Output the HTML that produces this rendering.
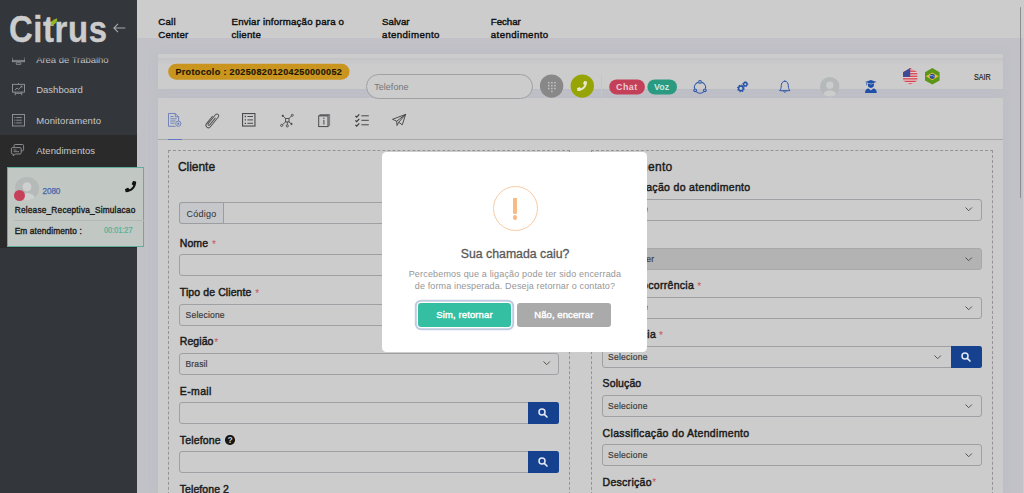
<!DOCTYPE html>
<html lang="pt-BR">
<head>
<meta charset="utf-8">
<title>Citrus</title>
<style>
*{box-sizing:border-box;margin:0;padding:0}
html,body{width:1024px;height:493px;overflow:hidden}
body{position:relative;background:#c1c1c7;font-family:"Liberation Sans",sans-serif;color:#111}
.a,.t{position:absolute}
.t{white-space:nowrap;line-height:1}
.card{background:#ccc}
.inp{border:1px solid #9fa0a3;border-radius:3px;background:#ccc;height:22px}
.btn{background:#16418e;border-radius:0 2.500px 2.500px 0;height:22px;width:30px}
.req{color:#c9535a}
svg{position:absolute;overflow:visible}
</style>
</head>
<body>
<!-- header -->
<div class="a" style="left:137px;top:0;width:887px;height:38px;background:#ccc"></div>
<div class="t" id="n1a" style="left:158.30px;top:17.39px;font-size:9.7px;color:#0f0f0f;-webkit-text-stroke:0.4px #0f0f0f;letter-spacing:0.199px;">Call</div><div class="t" id="n1b" style="left:158.30px;top:30.39px;font-size:9.7px;color:#0f0f0f;-webkit-text-stroke:0.4px #0f0f0f;letter-spacing:0.184px;">Center</div><div class="t" id="n2a" style="left:231.50px;top:17.39px;font-size:9.7px;color:#0f0f0f;-webkit-text-stroke:0.4px #0f0f0f;letter-spacing:0.185px;">Enviar informação para o</div><div class="t" id="n2b" style="left:231.50px;top:30.39px;font-size:9.7px;color:#0f0f0f;-webkit-text-stroke:0.4px #0f0f0f;letter-spacing:0.214px;">cliente</div><div class="t" id="n3a" style="left:382.10px;top:17.39px;font-size:9.7px;color:#0f0f0f;-webkit-text-stroke:0.4px #0f0f0f;letter-spacing:0.006px;">Salvar</div><div class="t" id="n3b" style="left:382.10px;top:30.39px;font-size:9.7px;color:#0f0f0f;-webkit-text-stroke:0.4px #0f0f0f;letter-spacing:0.407px;">atendimento</div><div class="t" id="n4a" style="left:490.80px;top:17.39px;font-size:9.7px;color:#0f0f0f;-webkit-text-stroke:0.4px #0f0f0f;letter-spacing:-0.051px;">Fechar</div><div class="t" id="n4b" style="left:490.80px;top:30.39px;font-size:9.7px;color:#0f0f0f;-webkit-text-stroke:0.4px #0f0f0f;letter-spacing:0.407px;">atendimento</div>

<!-- cards -->
<div class="a card" style="left:158px;top:54px;width:845px;height:35px;box-shadow:0 0 9px rgba(176,176,200,.28)"></div>
<div class="a card" style="left:158px;top:97.5px;width:845px;height:396px;box-shadow:0 0 9px rgba(176,176,200,.28)"></div>

<div class="a" style="left:158px;top:58px;width:845px;height:7px;background:linear-gradient(rgba(168,168,180,.22),rgba(168,168,180,0))"></div>
<!-- toolbar row -->
<svg style="left:0;top:0" width="1024" height="100" viewBox="0 0 1024 100"><rect x="168.2" y="63.7" width="181.3" height="16" rx="8" fill="#c9951e"/></svg>
<div class="t" id="proto" style="left:175.40px;top:68.38px;font-size:9px;color:#1d1505;font-weight:bold;-webkit-text-stroke:0.15px #1d1505;letter-spacing:0.353px;">Protocolo : 202508201204250000052</div>
<div class="a" style="left:366px;top:74px;width:167px;height:25px;border:1px solid #9fa0a4;border-radius:13px;background:#ccc"></div>
<div class="t" id="telph" style="left:374.20px;top:82.68px;font-size:9px;color:#75767a;letter-spacing:0.038px;">Telefone</div>
<svg style="left:0;top:0" width="1024" height="110" viewBox="0 0 1024 110"><circle cx="551.6" cy="86.1" r="11.7" fill="#888"/><circle cx="582.3" cy="86.1" r="11.7" fill="#96a505"/><rect x="609.2" y="79.4" width="35.7" height="15" rx="7.5" fill="#c34058"/><rect x="647.4" y="79.4" width="29.6" height="15" rx="7.5" fill="#2a9a80"/></svg>
<svg style="left:548px;top:81.5px" width="8" height="10.5" viewBox="0 0 8 10.5"><g fill="#c2c2c2"><rect x="0" y="0" width="1.5" height="1.5"/><rect x="3.1" y="0" width="1.5" height="1.5"/><rect x="6.2" y="0" width="1.5" height="1.5"/><rect x="0" y="2.9" width="1.5" height="1.5"/><rect x="3.1" y="2.9" width="1.5" height="1.5"/><rect x="6.2" y="2.9" width="1.5" height="1.5"/><rect x="0" y="5.8" width="1.5" height="1.5"/><rect x="3.1" y="5.8" width="1.5" height="1.5"/><rect x="6.2" y="5.8" width="1.5" height="1.5"/><rect x="3.1" y="8.7" width="1.5" height="1.5"/></g></svg>
<svg style="left:577.3px;top:81px" width="10" height="10" viewBox="0 0 512 512"><path fill="#e6ebcf" d="M493.4 24.6l-104-24c-11.3-2.6-22.9 3.300-27.500 13.900l-48 112c-4.200 9.800-1.400 21.300 6.900 28l60.600 49.600c-36 76.700-98.900 140.500-177.200 177.200l-49.600-60.600c-6.800-8.300-18.200-11.100-28-6.900l-112 48C3.900 366.500-2 378.100.6 389.400l24 104C27.100 504.200 36.700 512 48 512c256.100 0 464-207.500 464-464 0-11.200-7.700-20.900-18.600-23.400z"/></svg>
<div class="a" style="left:601.3px;top:74px;width:1px;height:24.5px;background:#c4c4c9"></div>
<div class="t" id="chat" style="left:616.00px;top:83.37px;font-size:8.9px;color:#eccbd2;font-weight:bold;letter-spacing:0.522px;">Chat</div>
<div class="t" id="voz" style="left:653.90px;top:83.37px;font-size:8.9px;color:#c8e8e0;font-weight:bold;letter-spacing:0.088px;">Voz</div>
<!-- share icon -->
<svg style="left:692.6px;top:80px" width="14" height="13.5" viewBox="0 0 14 13.5" fill="none" stroke="#2b55a8" stroke-width="1.050"><circle cx="7" cy="1.900" r="1.350"/><circle cx="2.150" cy="10.300" r="1.350"/><circle cx="11.850" cy="10.300" r="1.350"/><path d="M8.730 2.170 A5.600 5.600 0 0 1 12.480 8.660"/><path d="M10.750 11.660 A5.600 5.600 0 0 1 3.250 11.660"/><path d="M1.520 8.660 A5.600 5.600 0 0 1 5.270 2.170"/></svg>
<!-- gears icon -->
<svg style="left:737px;top:81px" width="11.5" height="11.5" viewBox="0 0 11.500 11.500" fill="none" stroke="#2350a6"><circle cx="3.900" cy="7.400" r="2.300" stroke-width="1.500"/><circle cx="3.900" cy="7.400" r="3.300" stroke-width="1.100" stroke-dasharray="1.300 1.290"/><circle cx="8.300" cy="3.200" r="1.700" stroke-width="1.300"/><circle cx="8.300" cy="3.200" r="2.500" stroke-width="1" stroke-dasharray="1 .96"/></svg>
<!-- bell icon -->
<svg style="left:779.4px;top:80px" width="11.6" height="13.500" viewBox="0 0 11.600 13.500" fill="none" stroke="#2b55a8" stroke-width="1"><path d="M5.800 1.300 C3.200 1.300 2.300 3.600 2.300 5.600 C2.300 8.200 1.500 9.600 .7 10.700 L10.900 10.700 C10.100 9.600 9.300 8.200 9.300 5.600 C9.300 3.600 8.400 1.300 5.800 1.300 Z"/><path d="M5.800 1.300 L5.800 .3"/><path d="M4.500 11.300 A1.400 1.400 0 0 0 7.100 11.300"/></svg>
<!-- avatar -->
<svg style="left:819.6px;top:77px" width="19.6" height="19.6" viewBox="0 0 24 24"><defs><clipPath id="av"><circle cx="12" cy="12" r="12"/></clipPath></defs><g clip-path="url(#av)"><rect width="24" height="24" fill="#b5b9b9"/><circle cx="12" cy="10" r="4.500" fill="#cbcdcd"/><ellipse cx="12" cy="22.500" rx="8.300" ry="6.300" fill="#cbcdcd"/></g></svg>
<!-- graduate icon -->
<svg style="left:864.8px;top:80.2px" width="11.800" height="13" viewBox="0 0 11.800 13" fill="#1f4fa8"><path d="M5.900 0 L11.600 1.900 L5.900 3.800 L.2 1.900 Z"/><path d="M1 2.500 L1.600 2.700 L1.600 5.300 L1 5.300 Z"/><path d="M2.800 3.300 L5.900 4.400 L9 3.300 L9 4.600 A3.100 3.300 0 0 1 2.800 4.600 Z"/><path d="M0 13 C0 10.100 1.500 8.800 3.500 8.600 L5.900 10.600 L8.300 8.600 C10.300 8.800 11.800 10.100 11.800 13 Z"/></svg>
<!-- US flag -->
<svg style="left:902.8px;top:68px" width="14.600" height="16.600" viewBox="0 0 14.600 16.600"><defs><clipPath id="hx"><path d="M7.300 0 L14.600 4.150 L14.600 12.450 L7.300 16.600 L0 12.450 L0 4.150 Z"/></clipPath></defs><g clip-path="url(#hx)"><rect width="14.600" height="16.600" fill="#e2cdd1"/><g fill="#d6414c"><rect y="0" width="14.600" height="1.280"/><rect y="2.550" width="14.600" height="1.280"/><rect y="5.100" width="14.600" height="1.280"/><rect y="7.650" width="14.600" height="1.280"/><rect y="10.200" width="14.600" height="1.280"/><rect y="12.750" width="14.600" height="1.280"/><rect y="15.300" width="14.600" height="1.300"/></g><rect width="7.200" height="8.900" fill="#3e4a94"/></g></svg>
<!-- BR flag -->
<svg style="left:925.4px;top:68px" width="14.600" height="16.600" viewBox="0 0 14.600 16.600"><path d="M7.300 0 L14.600 4.150 L14.600 12.450 L7.300 16.600 L0 12.450 L0 4.150 Z" fill="#5b9616"/><path d="M.9 8.300 L7.300 4.400 L13.700 8.300 L7.300 12.200 Z" fill="#dfc13d"/><circle cx="7.300" cy="8.300" r="2.600" fill="#2d4b9d"/><path d="M4.900 7.600 Q7.300 7 9.800 8.900" stroke="#c9d2e8" stroke-width=".6" fill="none"/></svg>
<div class="t" id="sair" style="left:974.00px;top:74.36px;font-size:8.2px;color:#222;-webkit-text-stroke:0.15px #222;transform:scaleX(0.878);transform-origin:0 0;">SAIR</div>

<!-- tab icons -->
<div class="a" style="left:158px;top:139px;width:845px;height:1px;background:#a8a8ac"></div>
<div class="a" style="left:168px;top:138.600px;width:14px;height:1.400px;background:#5f78c4"></div>
<!-- doc -->
<svg style="left:168.200px;top:113.200px" width="13.500" height="13.800" viewBox="0 0 13.500 13.800" fill="none" stroke="#5c74b4" stroke-width=".8"><path d="M10.600 8 L10.600 3.800 L7.300 .5 L.5 .5 L.5 13.300 L7.600 13.300"/><path d="M7.300 .5 L7.300 3.800 L10.600 3.800"/><path d="M2.300 3.600 L5.500 3.600 M2.300 5.800 L8.600 5.800 M2.300 8 L7.600 8 M2.300 10.200 L6.600 10.200" stroke-width=".8"/><circle cx="10.300" cy="10.700" r="2.600"/><rect x="9.400" y="9.800" width="1.800" height="1.800" fill="#5c74b4" stroke="none"/></svg>
<!-- clip -->
<svg style="left:205px;top:112.500px" width="14.500" height="15.500" viewBox="0 0 14.500 15.500" fill="none" stroke="#555557" stroke-width="1" stroke-linecap="round"><g transform="translate(7.200 7.600) rotate(39)"><path d="M-2.500 -3.500 L-2.500 5.950 A2.500 2.500 0 0 0 2.500 5.950 L2.500 -6.600 A1.850 1.850 0 0 0 -1.200 -6.600 L-1.200 4.900 A1 1 0 0 0 .8 4.900 L.8 -3.800"/></g></svg>
<!-- list -->
<svg style="left:242.400px;top:113.300px" width="13.500" height="13.600" viewBox="0 0 13.500 13.600" fill="none" stroke="#4a4a4c"><rect x=".55" y=".55" width="12.400" height="12.500" stroke-width="1.100"/><path d="M5.400 3.500 L11 3.500 M5.400 6.900 L11 6.900 M5.400 10.300 L11 10.300" stroke-width="1"/><path d="M2.700 3.500 L4 3.500 M2.700 6.900 L4 6.900 M2.700 10.300 L4 10.300" stroke-width="1.300"/></svg>
<!-- network -->
<svg style="left:280px;top:113.600px" width="14.400" height="13.400" viewBox="0 0 14.400 13.400" fill="none" stroke="#47474a" stroke-width=".9"><rect x="5.600" y="4.500" width="3.400" height="3.400"/><path d="M5.600 4.500 L3.300 2.200 M9 4.500 L11.500 2 M5.600 7.900 L2.500 10.700 M7.300 7.900 L7.300 10.800 M9 7.900 L11 9.600"/><circle cx="2.800" cy="1.800" r=".7" fill="#47474a"/><circle cx="12.300" cy="1.300" r="1"/><circle cx="1.700" cy="11.400" r="1.100"/><circle cx="7.300" cy="11.900" r="1.100"/><circle cx="11.500" cy="10" r=".7" fill="#47474a"/></svg>
<!-- info book -->
<svg style="left:318px;top:113.900px" width="12.200" height="13.200" viewBox="0 0 12.200 13.200" fill="none" stroke="#4b4b4e"><rect x=".7" y="1.900" width="9.300" height="10.700" stroke-width="1"/><path d="M1 1.500 L2 .5 L12 .5 L10.200 1.500 Z" fill="#4b4b4e" stroke-width=".3"/><path d="M10.300 1.700 L11.800 .6 L11.800 11.400 L10.300 12.700 Z" fill="#77777b" stroke="#77777b" stroke-width=".4"/><path d="M5.900 6 L5.900 10.600" stroke-width="1"/><circle cx="5.900" cy="4.300" r=".7" fill="#4b4b4e" stroke="none"/></svg>
<!-- checklist -->
<svg style="left:354.600px;top:114.300px" width="14" height="12" viewBox="0 0 14 12" fill="none" stroke="#47474a" stroke-width="1"><path d="M6.400 1.800 L13.800 1.800 M6.400 6.300 L13.800 6.300 M6.400 10.800 L13.800 10.800"/><path d="M.4 1.800 L1.700 3.100 L4.300 .3 M.4 6.300 L1.700 7.600 L4.300 4.800 M.4 10.800 L1.700 12.100 L4.300 9.300" stroke-width="1.150" stroke="#38383a"/></svg>
<!-- plane -->
<svg style="left:392.200px;top:114.300px" width="14" height="12" viewBox="0 0 14 12" fill="none" stroke="#3f3f42" stroke-width=".9" stroke-linejoin="round"><path d="M13.600 .4 L.5 5.300 L4.700 7.200 L13.600 .4 L10.300 10.800 L6.700 8.300 L5 11.500 L4.700 7.200"/><path d="M6.700 8.300 L13.600 .4"/></svg>

<!-- dashed boxes -->
<div class="a" style="left:168.200px;top:150.200px;width:401.800px;height:360px;border:1px dashed #949497"></div>
<div class="a" style="left:591.200px;top:150.200px;width:401.800px;height:360px;border:1px dashed #949497"></div>
<div class="t" id="tcli" style="left:177.90px;top:160.64px;font-size:12px;color:#1b1b1b;-webkit-text-stroke:0.4px #1b1b1b;letter-spacing:-0.027px;">Cliente</div><div class="t" id="tatd" style="right:351.35px;top:160.64px;font-size:12px;color:#1b1b1b;-webkit-text-stroke:0.4px #1b1b1b;letter-spacing:0.350px;">Atendimento</div>

<!-- left column -->
<div class="a inp" style="left:179.300px;top:202px;width:379.500px"></div>
<div class="a" style="left:179.300px;top:202px;width:44.500px;height:22px;border:1px solid #9c9da0;border-radius:3px 0 0 3px;background:#c6c7ca"></div>
<div class="t" id="cod" style="left:186.60px;top:209.88px;font-size:9px;color:#2e2e2e;letter-spacing:0.234px;">Código</div>
<div class="t" id="l1" style="left:179.80px;top:238.31px;font-size:10.5px;color:#1b1b1b;-webkit-text-stroke:0.45px #1b1b1b;letter-spacing:0.061px;">Nome</div><div class="t" id="l1r" style="left:212.00px;top:239.73px;font-size:10px;color:#c9535a;">*</div>
<div class="a inp" style="left:179.300px;top:254px;width:379.500px"></div>
<div class="t" id="l2" style="left:179.80px;top:287.31px;font-size:10.5px;color:#1b1b1b;-webkit-text-stroke:0.45px #1b1b1b;letter-spacing:0.098px;">Tipo de Cliente</div><div class="t" id="l2r" style="left:255.30px;top:288.74px;font-size:10px;color:#c9535a;">*</div>
<div class="a inp" style="left:179.300px;top:303.500px;width:379.500px"></div>
<div class="t" id="s2" style="left:185.60px;top:310.50px;font-size:8.5px;color:#3c3c3c;-webkit-text-stroke:0.2px #3c3c3c;letter-spacing:0.207px;">Selecione</div><svg style="left:542.500px;top:312px" width="7.400" height="4.400" viewBox="0 0 7.400 4.400"><path d="M.5 .5 L3.700 3.700 L6.900 .5" fill="none" stroke="#4c4c4c" stroke-width=".95"/></svg>
<div class="t" id="l3" style="left:179.80px;top:336.31px;font-size:10.5px;color:#1b1b1b;-webkit-text-stroke:0.45px #1b1b1b;letter-spacing:0.064px;">Região</div><div class="t" id="l3r" style="left:214.30px;top:337.74px;font-size:10px;color:#c9535a;">*</div>
<div class="a inp" style="left:179.300px;top:352.500px;width:379.500px"></div>
<div class="t" id="s3" style="left:185.60px;top:359.50px;font-size:8.5px;color:#3c3c3c;-webkit-text-stroke:0.2px #3c3c3c;letter-spacing:0.107px;">Brasil</div><svg style="left:542.500px;top:361px" width="7.400" height="4.400" viewBox="0 0 7.400 4.400"><path d="M.5 .5 L3.700 3.700 L6.900 .5" fill="none" stroke="#4c4c4c" stroke-width=".95"/></svg>
<div class="t" id="l4" style="left:179.80px;top:385.61px;font-size:10.5px;color:#1b1b1b;-webkit-text-stroke:0.45px #1b1b1b;letter-spacing:0.367px;">E-mail</div>
<div class="a inp" style="left:179.300px;top:402px;width:349.500px;border-radius:3px 0 0 3px"></div>
<div class="a btn" style="left:528px;top:402px;width:30.800px"></div>
<svg style="left:538px;top:407.700px" width="10" height="10" viewBox="0 0 10 10"><circle cx="4" cy="4" r="3" fill="none" stroke="#e3e9f6" stroke-width="1.500"/><path d="M6.300 6.300 L9 9" stroke="#e3e9f6" stroke-width="1.700" stroke-linecap="round"/></svg>
<div class="t" id="l5" style="left:179.80px;top:435.01px;font-size:10.5px;color:#1b1b1b;-webkit-text-stroke:0.45px #1b1b1b;letter-spacing:0.142px;">Telefone</div>
<div class="a" style="left:225.300px;top:435.200px;width:9.400px;height:9.400px;border-radius:50%;background:#161616"></div>
<div class="t" style="left:227.600px;top:436.100px;font-size:8.500px;font-weight:bold;color:#cfcfcf">?</div>
<div class="a inp" style="left:179.300px;top:451px;width:349.500px;border-radius:3px 0 0 3px"></div>
<div class="a btn" style="left:528px;top:451px;width:30.800px"></div>
<svg style="left:538px;top:456.700px" width="10" height="10" viewBox="0 0 10 10"><circle cx="4" cy="4" r="3" fill="none" stroke="#e3e9f6" stroke-width="1.500"/><path d="M6.300 6.300 L9 9" stroke="#e3e9f6" stroke-width="1.700" stroke-linecap="round"/></svg>
<div class="t" id="l6" style="left:179.80px;top:484.21px;font-size:10.5px;color:#1b1b1b;-webkit-text-stroke:0.45px #1b1b1b;letter-spacing:0.070px;">Telefone 2</div>

<!-- right column -->
<div class="t" id="r1" style="right:273.47px;top:181.61px;font-size:10.5px;color:#1b1b1b;-webkit-text-stroke:0.45px #1b1b1b;letter-spacing:0.330px;">Finalização do atendimento</div>
<div class="a inp" style="left:602.200px;top:198.500px;width:379.500px"></div>
<div class="t" id="rv1" style="right:375.70px;top:205.30px;font-size:8.5px;color:#3b62b5;-webkit-text-stroke:0.2px #3b62b5;letter-spacing:0.300px;">Selecione</div><svg style="left:965px;top:207px" width="7.400" height="4.400" viewBox="0 0 7.400 4.400"><path d="M.5 .5 L3.700 3.700 L6.900 .5" fill="none" stroke="#4c4c4c" stroke-width=".95"/></svg>
<div class="a inp" style="left:602.200px;top:247.800px;width:379.500px;background:#b3b3b3;border-color:#a8a8a9"></div>
<div class="t" id="rv2" style="right:369.70px;top:254.80px;font-size:8.5px;color:#3c3c3c;-webkit-text-stroke:0.2px #3c3c3c;letter-spacing:0.300px;">Responder</div><svg style="left:965px;top:256.500px" width="7.400" height="4.400" viewBox="0 0 7.400 4.400"><path d="M.5 .5 L3.700 3.700 L6.900 .5" fill="none" stroke="#4c4c4c" stroke-width=".95"/></svg>
<div class="t" id="r3" style="right:329.90px;top:280.41px;font-size:10.5px;color:#1b1b1b;-webkit-text-stroke:0.45px #1b1b1b;letter-spacing:0.300px;">Tipo de ocorrência</div><div class="t" id="r3r" style="left:697.20px;top:281.84px;font-size:10px;color:#c9535a;">*</div>
<div class="a inp" style="left:602.200px;top:296.800px;width:379.500px"></div>
<div class="t" id="rv3" style="right:375.70px;top:303.30px;font-size:8.5px;color:#3b62b5;-webkit-text-stroke:0.2px #3b62b5;letter-spacing:0.300px;">Selecione</div><svg style="left:965px;top:305.500px" width="7.400" height="4.400" viewBox="0 0 7.400 4.400"><path d="M.5 .5 L3.700 3.700 L6.900 .5" fill="none" stroke="#4c4c4c" stroke-width=".95"/></svg>
<div class="t" id="r4" style="right:367.90px;top:329.21px;font-size:10.5px;color:#1b1b1b;-webkit-text-stroke:0.45px #1b1b1b;letter-spacing:0.300px;">Ocorrência</div><div class="t" id="r4r" style="left:659.00px;top:330.64px;font-size:10px;color:#c9535a;">*</div>
<div class="a inp" style="left:602.200px;top:346px;width:349.500px;border-radius:3px 0 0 3px"></div>
<div class="a btn" style="left:951px;top:346px;width:30.700px"></div>
<svg style="left:961px;top:351.600px" width="10" height="10" viewBox="0 0 10 10"><circle cx="4" cy="4" r="3" fill="none" stroke="#e3e9f6" stroke-width="1.500"/><path d="M6.300 6.300 L9 9" stroke="#e3e9f6" stroke-width="1.700" stroke-linecap="round"/></svg>
<div class="t" id="s4r" style="left:608.00px;top:352.60px;font-size:8.5px;color:#3c3c3c;-webkit-text-stroke:0.2px #3c3c3c;letter-spacing:0.257px;">Selecione</div><svg style="left:934px;top:354.500px" width="7.400" height="4.400" viewBox="0 0 7.400 4.400"><path d="M.5 .5 L3.700 3.700 L6.900 .5" fill="none" stroke="#4c4c4c" stroke-width=".95"/></svg>
<div class="t" id="r5" style="left:602.60px;top:378.41px;font-size:10.5px;color:#1b1b1b;-webkit-text-stroke:0.45px #1b1b1b;letter-spacing:0.108px;">Solução</div>
<div class="a inp" style="left:602.200px;top:395px;width:379.500px"></div>
<div class="t" id="s5r" style="left:608.00px;top:401.60px;font-size:8.5px;color:#3c3c3c;-webkit-text-stroke:0.2px #3c3c3c;letter-spacing:0.257px;">Selecione</div><svg style="left:965px;top:403.500px" width="7.400" height="4.400" viewBox="0 0 7.400 4.400"><path d="M.5 .5 L3.700 3.700 L6.900 .5" fill="none" stroke="#4c4c4c" stroke-width=".95"/></svg>
<div class="t" id="r6" style="left:602.60px;top:427.61px;font-size:10.5px;color:#1b1b1b;-webkit-text-stroke:0.45px #1b1b1b;letter-spacing:0.328px;">Classificação do Atendimento</div>
<div class="a inp" style="left:602.200px;top:444.300px;width:379.500px"></div>
<div class="t" id="s6r" style="left:608.00px;top:450.60px;font-size:8.5px;color:#3c3c3c;-webkit-text-stroke:0.2px #3c3c3c;letter-spacing:0.257px;">Selecione</div><svg style="left:965px;top:452.800px" width="7.400" height="4.400" viewBox="0 0 7.400 4.400"><path d="M.5 .5 L3.700 3.700 L6.900 .5" fill="none" stroke="#4c4c4c" stroke-width=".95"/></svg>
<div class="t" id="r7" style="left:602.60px;top:476.91px;font-size:10.5px;color:#1b1b1b;-webkit-text-stroke:0.45px #1b1b1b;letter-spacing:0.277px;">Descrição</div><div class="t" id="r7r" style="left:652.30px;top:478.34px;font-size:10px;color:#c9535a;">*</div>

<!-- sidebar -->
<div class="a" style="left:0;top:0;width:137px;height:493px;background:#33363b"></div>
<div class="a" style="left:0;top:135px;width:137px;height:113px;background:#2a2a2a"></div>
<div class="t" id="m1" style="left:36.20px;top:54.96px;font-size:9.5px;color:#c8c8c8;letter-spacing:-0.033px;">Área de Trabalho</div><div class="t" id="m2" style="left:36.20px;top:85.46px;font-size:9.5px;color:#c8c8c8;letter-spacing:0.014px;">Dashboard</div><div class="t" id="m3" style="left:36.20px;top:115.66px;font-size:9.5px;color:#c8c8c8;letter-spacing:0.127px;">Monitoramento</div><div class="t" id="m4" style="left:36.20px;top:145.76px;font-size:9.5px;color:#c8c8c8;letter-spacing:0.073px;">Atendimentos</div>
<!-- sidebar icons -->
<svg style="left:11.500px;top:52px" width="13" height="13" viewBox="0 0 13 13" fill="none" stroke="#9b9da1" stroke-width=".85"><rect x=".5" y=".5" width="12" height="9.200"/><path d="M.5 8.400 L12.500 8.400"/><path d="M4.200 10.700 L8.800 10.700 L8.800 12.400 L4.200 12.400 Z" stroke-width=".7"/></svg>
<svg style="left:11.500px;top:83px" width="13" height="12.500" viewBox="0 0 13 12.500" fill="none" stroke="#9b9da1" stroke-width=".85"><rect x=".5" y="1.300" width="12" height="7.800"/><path d="M6.500 1.300 L6.500 .2"/><path d="M2.800 7.200 L5 5 L6.600 6.300 L10 3.100 M8.600 3.100 L10 3.100 L10 4.500" stroke-width=".8"/><path d="M3.200 9.100 L3.200 12.300 M9.800 9.100 L9.800 12.300 M3.200 10.400 L9.800 10.400" stroke-width=".8"/></svg>
<svg style="left:11.500px;top:113.700px" width="13" height="12.500" viewBox="0 0 13 12.500" fill="none" stroke="#9b9da1" stroke-width=".85"><rect x=".5" y=".5" width="12" height="11.500"/><path d="M4.200 3.500 L9.800 3.500 M4.200 6.200 L9.800 6.200 M4.200 8.900 L9.800 8.900" stroke-width=".8"/><path d="M2.400 3.500 L3.300 3.500 M2.400 6.200 L3.300 6.200 M2.400 8.900 L3.300 8.900" stroke-width="1"/></svg>
<svg style="left:11.300px;top:144px" width="13" height="12.500" viewBox="0 0 13 12.500" fill="none" stroke="#9b9da1" stroke-width=".85"><path d="M3 3.300 L3 1.700 Q3 .5 4.200 .5 L11.400 .5 Q12.600 .5 12.600 1.700 L12.600 5.600 Q12.600 6.800 11.400 6.800 L10.400 6.800"/><path d="M1.600 3.600 L9 3.600 Q10.200 3.600 10.200 4.800 L10.200 8.800 Q10.200 10 9 10 L4.200 10 L2.300 11.900 L2.300 10 L1.600 10 Q.4 10 .4 8.800 L.4 4.800 Q.4 3.600 1.600 3.600 Z"/><path d="M2.500 6 L5.500 6 M2.500 7.700 L8 7.700" stroke-width=".8"/></svg>
<!-- logo area -->
<div class="a" style="left:0;top:0;width:137px;height:57px;background:#33363b"></div>
<div class="a" style="left:0;top:57px;width:137px;height:4px;background:linear-gradient(rgba(51,54,59,.8),rgba(51,54,59,0))"></div>
<div class="t" id="logo" style="left:8.50px;top:11.38px;font-size:37px;color:#cccccc;font-weight:bold;-webkit-text-stroke:0.4px #cccccc;letter-spacing:0.631px;transform:scaleX(.89);transform-origin:0 0;">Citrus</div>
<svg style="left:50px;top:18px" width="7.500" height="8" viewBox="0 0 7.500 8"><path d="M.7 7.800 Q-.3 2.300 7.200 .2 Q7.600 6 .7 7.800 Z" fill="#93b71c"/></svg>
<svg style="left:112.800px;top:22.500px" width="12.500" height="10" viewBox="0 0 12.500 10" fill="none" stroke="#a6a9af" stroke-width="1.100"><path d="M12.300 5 L.9 5 M5 .8 L.9 5 L5 9.200"/></svg>

<!-- call card -->
<div class="a" style="left:7.200px;top:166.700px;width:136.500px;height:80.500px;background:#c1c7c2;border:1px solid #62ad9b"></div>
<div class="a" style="left:15px;top:176.800px;width:24px;height:23.200px;border-radius:50%;background:#b5b9b8;overflow:hidden"><svg style="left:0;top:0" width="24" height="24" viewBox="0 0 24 24"><circle cx="12" cy="9.800" r="4.500" fill="#cdd0cf"/><ellipse cx="12" cy="22.300" rx="8.300" ry="6.300" fill="#cdd0cf"/></svg></div>
<div class="a" style="left:14.200px;top:190.300px;width:11.200px;height:11.200px;border-radius:50%;background:#c74059"></div>
<div class="t" id="c2080" style="left:42.50px;top:187.86px;font-size:8.2px;color:#4866aa;-webkit-text-stroke:0.25px #4866aa;letter-spacing:-0.106px;">2080</div><div class="t" id="crel" style="left:14.70px;top:206.37px;font-size:8.3px;color:#1a1a1a;-webkit-text-stroke:0.35px #1a1a1a;letter-spacing:0.203px;">Release_Receptiva_Simulacao</div>
<svg style="left:125.300px;top:180.800px" width="11.200" height="11.200" viewBox="0 0 512 512"><path fill="#121212" d="M493.400 24.600l-104-24c-11.300-2.600-22.900 3.300-27.500 13.900l-48 112c-4.200 9.800-1.400 21.300 6.900 28l60.600 49.600c-36 76.700-98.900 140.500-177.200 177.200l-49.600-60.600c-6.800-8.300-18.200-11.100-28-6.900l-112 48C3.900 366.500-2 378.100.6 389.400l24 104C27.100 504.200 36.700 512 48 512c256.100 0 464-207.500 464-464 0-11.200-7.700-20.900-18.600-23.400z"/></svg>
<div class="a" style="left:14px;top:220px;width:129.500px;height:1px;background:#b3b9b4"></div>
<div class="t" id="cem" style="left:14.70px;top:226.77px;font-size:8.3px;color:#1a1a1a;-webkit-text-stroke:0.35px #1a1a1a;letter-spacing:0.138px;">Em atendimento :</div><div class="t" id="ctime" style="left:104.30px;top:226.86px;font-size:8.2px;color:#4fb39b;-webkit-text-stroke:0.2px #4fb39b;transform:scaleX(0.894);transform-origin:0 0;">00:01:27</div>

<!-- scrollbar -->
<div class="a" style="left:1022.700px;top:0;width:1.300px;height:493px;background:#cbccd0"></div>
<div class="a" style="left:1019.600px;top:7px;width:1.500px;height:191px;background:#8d8d8f;border-radius:1px"></div>

<!-- modal -->
<div class="a" style="left:382px;top:152px;width:265px;height:199.500px;background:#fff;border-radius:4.500px"></div>
<div class="a" style="left:492.700px;top:186.300px;width:45px;height:45px;border:1.800px solid #f9cba4;border-radius:50%"></div>
<div class="a" style="left:513.100px;top:198.100px;width:3.800px;height:15.600px;border-radius:.6px .6px 1.600px 1.600px;background:#f8bb86"></div>
<div class="a" style="left:512.600px;top:215.300px;width:4.600px;height:4.600px;border-radius:50%;background:#f8bb86"></div>
<div class="t" id="mtitle" style="left:460.80px;top:247.59px;font-size:12.3px;color:#595959;-webkit-text-stroke:0.3px #595959;letter-spacing:-0.006px;">Sua chamada caiu?</div><div class="t" id="ml1" style="left:408.70px;top:270.18px;font-size:9px;color:#969696;letter-spacing:0.174px;">Percebemos que a ligação pode ter sido encerrada</div><div class="t" id="ml2" style="left:414.80px;top:282.38px;font-size:9px;color:#969696;letter-spacing:0.132px;">de forma inesperada. Deseja retornar o contato?</div>
<div class="a" style="left:418.400px;top:303px;width:92.800px;height:23.600px;border-radius:3px;background:#34bfa3;box-shadow:0 0 0 1.200px #fff,0 0 0 3.200px #bfcce0"></div>
<div class="t" id="b1" style="left:436.20px;top:310.16px;font-size:9.5px;color:#fff;-webkit-text-stroke:0.4px #fff;letter-spacing:0.124px;">Sim, retornar</div>
<div class="a" style="left:516.800px;top:303.300px;width:94.300px;height:23.300px;border-radius:3px;background:#aaa"></div>
<div class="t" id="b2" style="left:534.20px;top:310.16px;font-size:9.5px;color:#fff;-webkit-text-stroke:0.4px #fff;letter-spacing:0.092px;">Não, encerrar</div>

</body>
</html>
